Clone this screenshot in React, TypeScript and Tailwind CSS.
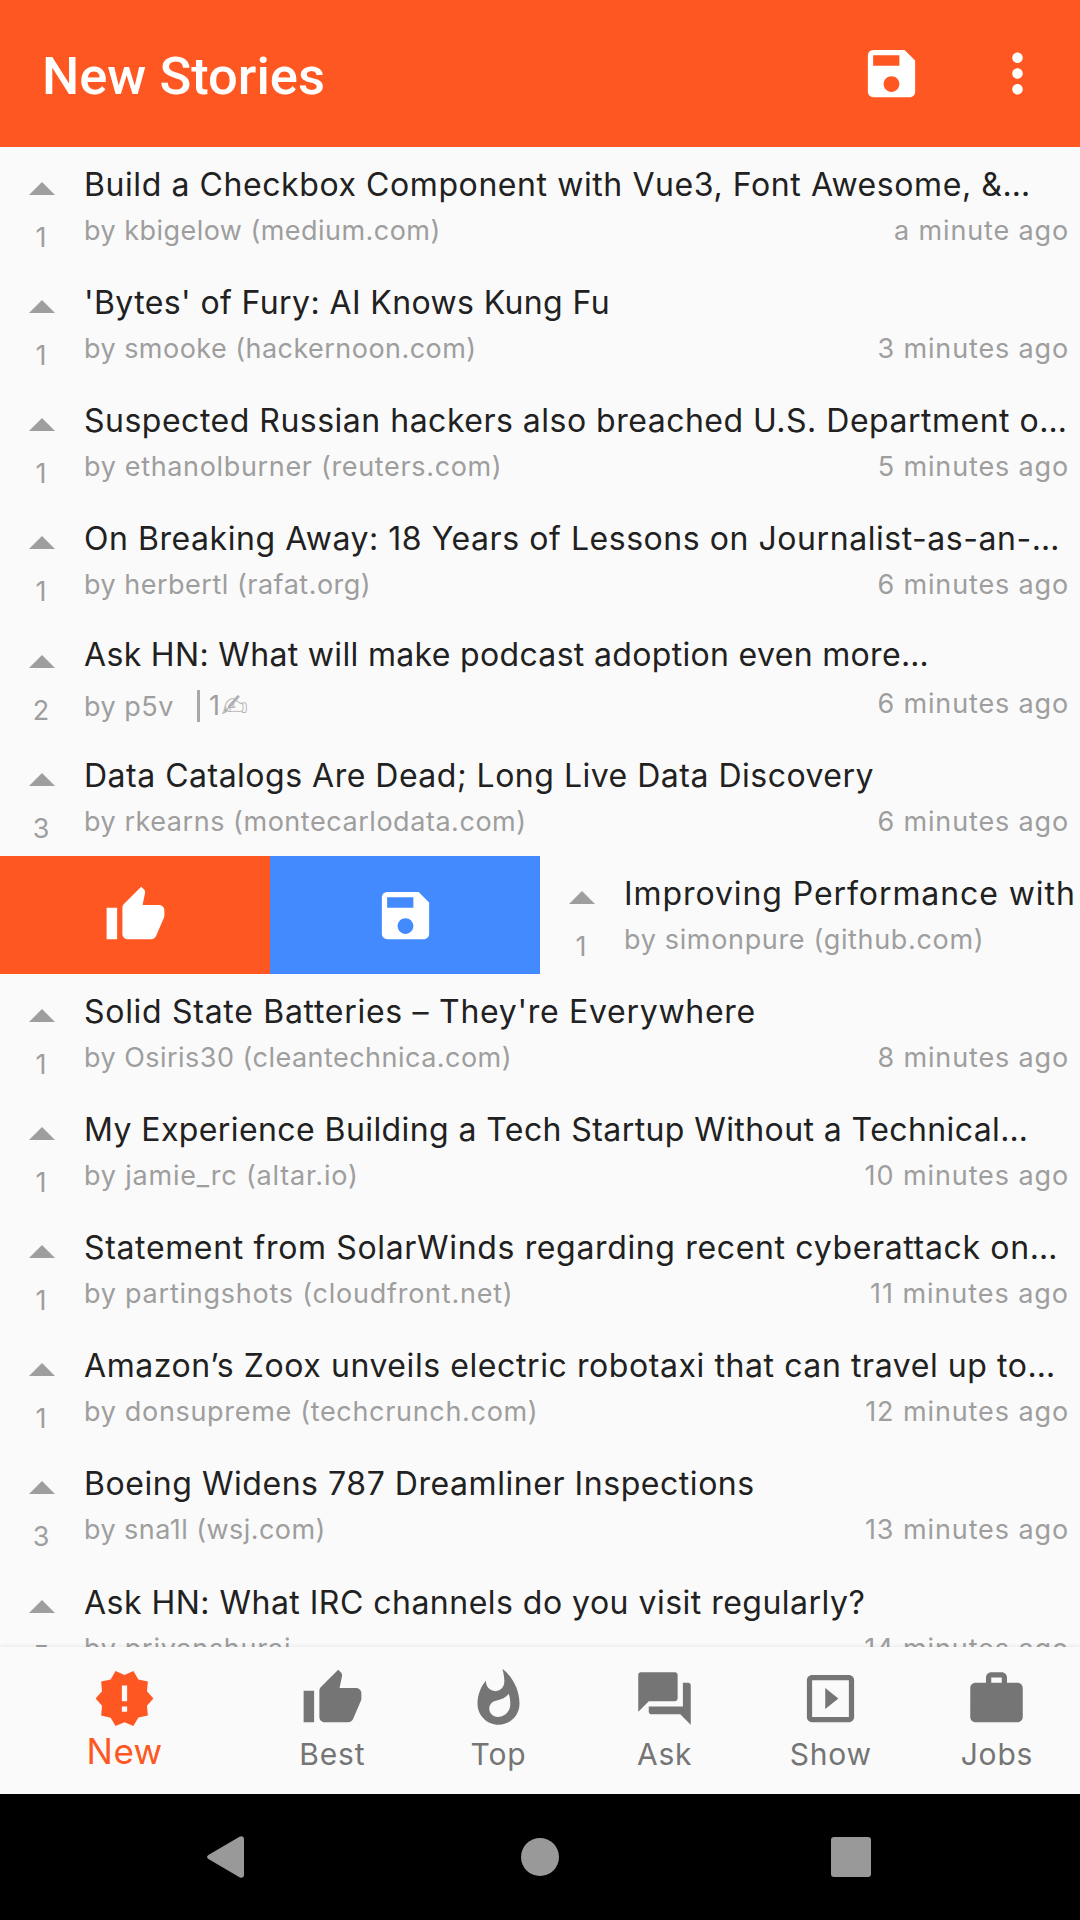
import type { ReactNode } from 'react';
import {
  MdMoreVert,
  MdNewReleases,
  MdQuestionAnswer,
  MdSave,
  MdSlideshow,
  MdThumbUp,
  MdWhatshot,
  MdWork,
} from 'react-icons/md';

type Story = {
  title: string;
  titleTracking: string;
  by: string;
  byTracking: string;
  score: number;
  age?: string;
  ageTracking?: string;
  comments?: number;
  swiped?: boolean;
};

const stories: Story[] = [
  { title: 'Build a Checkbox Component with Vue3, Font Awesome, &…', titleTracking: 'tracking-[0.58px]', by: 'by kbigelow (medium.com)', byTracking: 'tracking-[0.46px]', score: 1, age: 'a minute ago', ageTracking: 'tracking-[0.86px]' },
  { title: "'Bytes' of Fury: AI Knows Kung Fu", titleTracking: 'tracking-[0.39px]', by: 'by smooke (hackernoon.com)', byTracking: 'tracking-[0.46px]', score: 1, age: '3 minutes ago' },
  { title: 'Suspected Russian hackers also breached U.S. Department o…', titleTracking: 'tracking-[0.5px]', by: 'by ethanolburner (reuters.com)', byTracking: 'tracking-[0.66px]', score: 1, age: '5 minutes ago' },
  { title: 'On Breaking Away: 18 Years of Lessons on Journalist-as-an-…', titleTracking: 'tracking-[0.55px]', by: 'by herbertl (rafat.org)', byTracking: 'tracking-[0.5px]', score: 1, age: '6 minutes ago' },
  { title: 'Ask HN: What will make podcast adoption even more…', titleTracking: 'tracking-[0.33px]', by: 'by p5v', byTracking: 'tracking-[0.5px]', score: 2, age: '6 minutes ago', comments: 1 },
  { title: 'Data Catalogs Are Dead; Long Live Data Discovery', titleTracking: 'tracking-[0.5px]', by: 'by rkearns (montecarlodata.com)', byTracking: 'tracking-[0.54px]', score: 3, age: '6 minutes ago' },
  { title: 'Improving Performance with', titleTracking: 'tracking-[0.92px]', by: 'by simonpure (github.com)', byTracking: 'tracking-[0.66px]', score: 1, swiped: true },
  { title: "Solid State Batteries – They're Everywhere", titleTracking: 'tracking-[0.71px]', by: 'by Osiris30 (cleantechnica.com)', byTracking: 'tracking-[0.47px]', score: 1, age: '8 minutes ago' },
  { title: 'My Experience Building a Tech Startup Without a Technical…', titleTracking: 'tracking-[0.41px]', by: 'by jamie_rc (altar.io)', byTracking: 'tracking-[0.8px]', score: 1, age: '10 minutes ago', ageTracking: 'tracking-[0.9px]' },
  { title: 'Statement from SolarWinds regarding recent cyberattack on…', titleTracking: 'tracking-[0.65px]', by: 'by partingshots (cloudfront.net)', byTracking: 'tracking-[0.76px]', score: 1, age: '11 minutes ago', ageTracking: 'tracking-[0.95px]' },
  { title: 'Amazon’s Zoox unveils electric robotaxi that can travel up to…', titleTracking: 'tracking-[0.58px]', by: 'by donsupreme (techcrunch.com)', byTracking: 'tracking-[0.68px]', score: 1, age: '12 minutes ago', ageTracking: 'tracking-[0.9px]' },
  { title: 'Boeing Widens 787 Dreamliner Inspections', titleTracking: 'tracking-[0.55px]', by: 'by sna1l (wsj.com)', byTracking: 'tracking-[0.45px]', score: 3, age: '13 minutes ago', ageTracking: 'tracking-[0.9px]' },
  { title: 'Ask HN: What IRC channels do you visit regularly?', titleTracking: 'tracking-[0.48px]', by: 'by priyanshuraj', byTracking: 'tracking-[0.7px]', score: 5, age: '14 minutes ago', ageTracking: 'tracking-[0.9px]' },
];

function StoryItem({ story }: { story: Story }) {
  const hasComments = story.comments !== undefined;
  return (
    <div className="flex min-w-0 flex-1 text-[27px] leading-[34px] text-[#9e9e9e]">
      <div className="flex w-[84px] shrink-0 flex-col items-center pt-[35px]">
        <svg viewBox="0 0 26 13" className="h-[13px] w-[26px]" fill="currentColor">
          <path d="M0 13 13 0l13 13z" />
        </svg>
        <span className="mt-[26px] mr-0.5">{story.score}</span>
      </div>
      <div className={hasComments ? 'min-w-0 flex-1 pt-[15px]' : 'min-w-0 flex-1 pt-[18px]'}>
        <h2 className={`text-[32px] leading-10 whitespace-nowrap text-[#212121] ${story.titleTracking}`}>{story.title}</h2>
        <div className={`flex items-start justify-between pr-[11px] whitespace-nowrap ${hasComments ? 'mt-3' : 'mt-[9px]'}`}>
          <div className={hasComments ? 'flex pt-[3px]' : 'flex'}>
            <span className={story.byTracking}>{story.by}</span>
            {hasComments && (
              <span className="ml-[23px] flex h-8 items-center border-l-[3px] border-[#a8a8a8] pl-[9px]">
                {story.comments}
                <span className="ml-px text-[32px] text-[#b0b0b0] font-['DejaVu_Sans',sans-serif]">✍︎</span>
              </span>
            )}
          </div>
          {story.age && <span className={story.ageTracking ?? 'tracking-[0.85px]'}>{story.age}</span>}
        </div>
      </div>
    </div>
  );
}

function Tab({ icon, label, active = false }: { icon: ReactNode; label: string; active?: boolean }) {
  return (
    <div
      className={
        active
          ? 'flex flex-[1.5] flex-col items-center pt-5 text-[35px] tracking-[0.4px] text-[#ff5722]'
          : 'flex flex-1 flex-col items-center gap-[3px] pt-5 text-[30px] tracking-[0.8px] text-[#757575]'
      }
    >
      {icon}
      <span className="leading-[42px]">{label}</span>
    </div>
  );
}

export default function App() {
  return (
    <div className="flex h-[1920px] w-[1080px] flex-col overflow-hidden bg-[#fafafa] font-['Inter',sans-serif]">
      <header className="flex h-[147px] shrink-0 items-center bg-[#ff5722] pr-[31px] pl-[42px] text-white">
        <h1 className="flex-1 pt-1 text-[52.5px] leading-[60px] font-medium font-['Roboto',sans-serif]">New Stories</h1>
        <MdSave className="size-[63px]" />
        <MdMoreVert className="ml-[63px] size-[63px]" />
      </header>

      <main className="min-h-0 flex-1 overflow-hidden">
        {stories.map((story) => (
          <article key={story.title} className="flex h-[118.125px]">
            {story.swiped && (
              <div className="grid w-[540px] shrink-0 grid-cols-2 text-white">
                <div className="flex items-center justify-center bg-[#ff5722] pt-0.5">
                  <MdThumbUp className="size-[63px]" />
                </div>
                <div className="flex items-center justify-center bg-[#448aff] pt-0.5">
                  <MdSave className="size-[63px]" />
                </div>
              </div>
            )}
            <StoryItem story={story} />
          </article>
        ))}
      </main>

      <nav className="relative flex h-[147px] shrink-0 bg-[#fafafa] shadow-[0_-1px_4px_rgba(0,0,0,0.07)]">
        <Tab active label="New" icon={<MdNewReleases className="size-[63px]" />} />
        <Tab label="Best" icon={<MdThumbUp className="size-[63px]" />} />
        <Tab label="Top" icon={<MdWhatshot className="size-[63px]" />} />
        <Tab label="Ask" icon={<MdQuestionAnswer className="size-[63px]" />} />
        <Tab label="Show" icon={<MdSlideshow className="size-[63px]" />} />
        <Tab label="Jobs" icon={<MdWork className="size-[63px]" />} />
      </nav>

      <footer className="flex h-[126px] shrink-0 items-center bg-black pl-[207px] text-[#999999]">
        <svg viewBox="0 0 37 42" className="h-[42px] w-[37px]" fill="currentColor">
          <path d="M1.4 19 32.5.7C34.6-.5 37 .5 37 3v36c0 2.500-2.400 3.500-4.500 2.300L1.400 23C-.4 22-.4 20 1.400 19z" />
        </svg>
        <div className="ml-[277px] size-[38px] rounded-full bg-[#999999]" />
        <div className="ml-[272px] size-10 rounded-[3px] bg-[#999999]" />
      </footer>
    </div>
  );
}
